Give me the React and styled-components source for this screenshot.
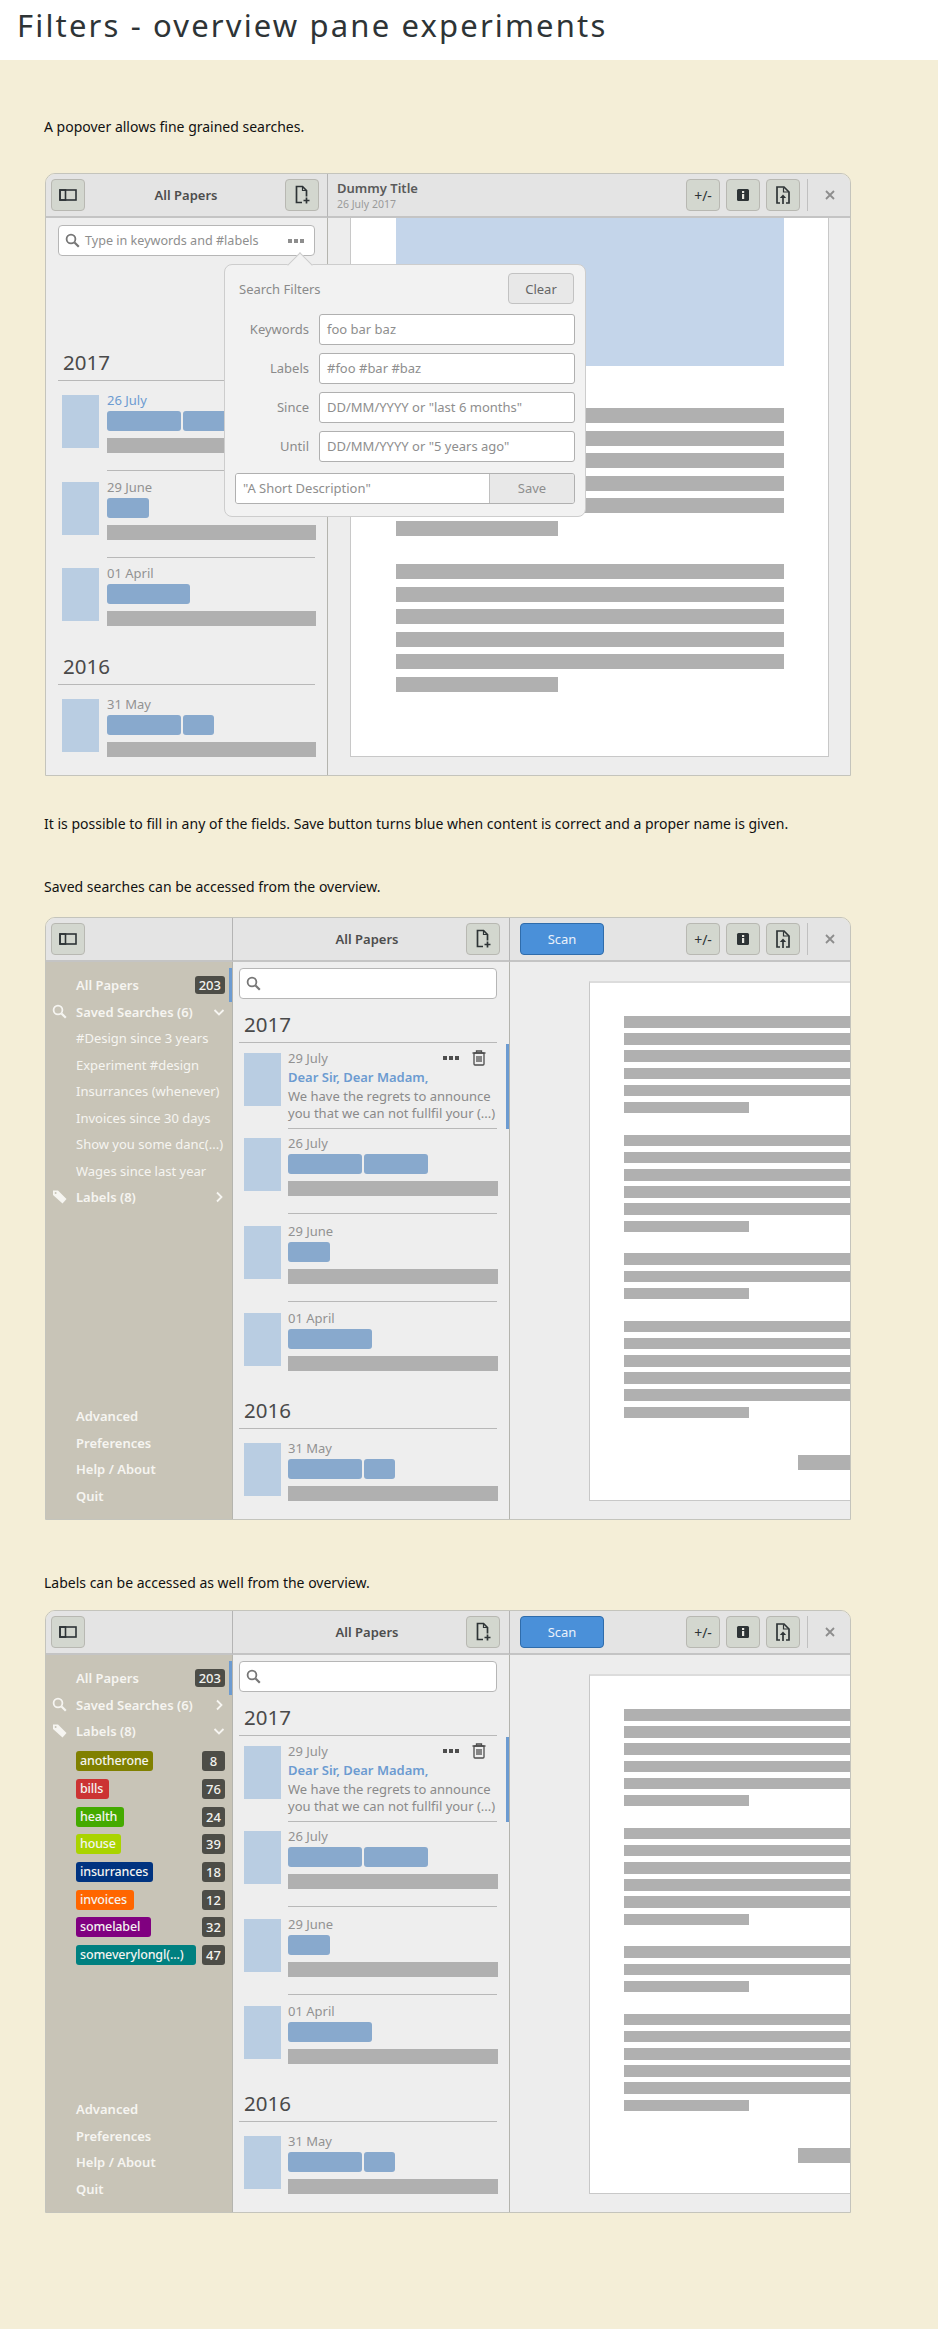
import styled, { createGlobalStyle } from "styled-components";

const GlobalStyle = createGlobalStyle`
  html, body {
    margin: 0;
    padding: 0;
    background-color: #f4eed7;
  }
  * {
    box-sizing: border-box;
  }
`;

const UI_FONT = `"Noto Sans", "Open Sans", sans-serif`;

const Page = styled.div`
  width: 938px;
  height: 2329px;
  overflow: hidden;
  background-color: #f4eed7;
  font-family: ${UI_FONT};
`;

const TitleBar = styled.header`
  height: 60px;
  background-color: #fff;
  display: flex;
  align-items: center;
  padding: 0 0 10px 17px;
`;

const Title = styled.h1`
  margin: 0;
  font-family: ${UI_FONT};
  font-size: 31px;
  font-weight: 400;
  letter-spacing: 2.15px;
  color: #2e3436;
`;

const Main = styled.main`
  padding-left: 45px;
`;

const Caption = styled.p`
  margin: ${(p) => p.$top}px 0 ${(p) => p.$bottom}px -1px;
  height: 20px;
  line-height: 20px;
  font-size: 14px;
  color: #111;
  white-space: nowrap;
`;

const Window = styled.section`
  position: relative;
  width: 806px;
  height: 603px;
  border: 1px solid #c4c4bc;
  border-radius: 10px 10px 0 0;
  overflow: hidden;
  display: grid;
  grid-template-columns: ${(p) => p.$cols};
  grid-template-rows: 44px 1fr;
`;

const HeaderPane = styled.div`
  background-color: #e4e4e4;
  border-bottom: 2px solid #c4c4c4;
  border-right: ${(p) => (p.$last ? "none" : "1px solid #b4b4b4")};
  display: flex;
  align-items: center;
  padding: 0 ${(p) => p.$right ?? 8}px 0 ${(p) => p.$left ?? 5}px;
`;

const HeaderTitle = styled.div`
  flex: 1;
  padding-left: ${(p) => p.$shift ?? 0}px;
  text-align: center;
  font-size: 13px;
  font-weight: 600;
  color: #4d4d4d;
`;

const DocTitleBlock = styled.div`
  display: flex;
  flex-direction: column;
  padding-left: 4px;
`;

const DocTitle = styled.div`
  font-size: 13px;
  font-weight: 600;
  line-height: 17px;
  color: #5a5a5a;
`;

const DocDate = styled.div`
  font-size: 10.5px;
  line-height: 14px;
  color: #9a9a9a;
`;

const ToolButton = styled.button`
  width: 34px;
  height: 32px;
  flex: none;
  padding: 0;
  display: flex;
  align-items: center;
  justify-content: center;
  background-color: #d3d7cf;
  border: 1px solid #b8b8b2;
  border-radius: 4px;
  font-family: ${UI_FONT};
  font-size: 14px;
  color: #2e3436;
`;

const ScanButton = styled.button`
  width: 84px;
  height: 32px;
  padding: 0;
  background-color: #4a90d9;
  border: 1px solid #2f6cab;
  border-radius: 4px;
  font-family: ${UI_FONT};
  font-size: 13px;
  color: #eaf2fb;
`;

const ToolGroup = styled.div`
  margin-left: auto;
  display: flex;
  align-items: center;
  gap: 6px;
`;

const Separator = styled.div`
  width: 1px;
  height: 32px;
  margin-left: 1px;
  background-color: #c0c0c0;
`;

const CloseIcon = styled.div`
  width: 24px;
  margin-left: 4px;
  display: flex;
  justify-content: center;
`;

const Sidebar = styled.nav`
  background-color: #c8c4b7;
  border-right: 1px solid #b4b4ae;
  display: flex;
  flex-direction: column;
  justify-content: space-between;
  padding: 10px 0 10px;
  color: #f6f5f1;
`;

const SideRow = styled.div`
  position: relative;
  height: 26.5px;
  display: grid;
  grid-template-columns: 24px 1fr auto;
  align-items: center;
  padding: 0 7px 0 6px;
  font-size: 13px;
  font-weight: ${(p) => (p.$bold ? 600 : 400)};
  white-space: nowrap;

  &::after {
    content: "";
    display: ${(p) => (p.$active ? "block" : "none")};
    position: absolute;
    right: 0;
    top: -4px;
    width: 3px;
    height: 34px;
    background-color: #6c9bd1;
  }
`;

const Count = styled.span`
  min-width: ${(p) => p.$min ?? 0}px;
  height: ${(p) => p.$h}px;
  line-height: ${(p) => p.$h}px;
  padding: 0 4px;
  border-radius: 3px;
  background-color: #4d4d47;
  color: #f3f3ee;
  text-align: center;
  font-size: 13px;
  font-weight: 500;
`;

const LabelList = styled.div`
  display: flex;
  flex-direction: column;
  gap: 7.7px;
  padding: 6.75px 7px 0 30px;
`;

const LabelRow = styled.div`
  display: flex;
  justify-content: space-between;
`;

const LabelTag = styled.span`
  height: 20px;
  line-height: 19px;
  width: ${(p) => p.$w}px;
  padding-left: 4px;
  border-radius: 3px;
  background-color: ${(p) => p.$color};
  color: #f4f4f0;
  font-size: 12.5px;
  font-weight: 500;
  letter-spacing: -0.15px;
  white-space: nowrap;
`;

const ListPane = styled.div`
  background-color: #eee;
  border-right: 1px solid #b4b4ae;
  padding: ${(p) => p.$top}px ${(p) => p.$right}px 0 ${(p) => p.$left}px;
  overflow: hidden;
`;

const SearchEntry = styled.div`
  height: 31px;
  display: flex;
  align-items: center;
  gap: 5px;
  padding: 0 10px 0 6px;
  background-color: #fff;
  border: 1px solid #b6b6b6;
  border-radius: 4px;
  font-size: 12.6px;
  color: #8e8e8e;
`;

const SearchText = styled.span`
  flex: 1;
  white-space: nowrap;
`;

const Year = styled.div`
  margin-top: ${(p) => p.$top}px;
  height: 36px;
  line-height: 35px;
  padding-left: 5px;
  border-bottom: 1px solid #b8b8b8;
  font-size: 20.5px;
  color: #4a4a4a;
`;

const ItemRow = styled.article`
  position: relative;
  display: flex;
  gap: ${(p) => p.$gap}px;
  padding: ${(p) => p.$pad}px 0 0 ${(p) => p.$left}px;

  &::after {
    content: "";
    display: ${(p) => (p.$active ? "block" : "none")};
    position: absolute;
    right: -12px;
    top: 1px;
    bottom: 0;
    width: 3px;
    background-color: #6c9bd1;
  }
`;

const Thumb = styled.div`
  width: 37px;
  height: 53px;
  flex: none;
  background-color: #b9cde2;
`;

const ItemBody = styled.div`
  flex: 1;
  min-width: 0;
  margin-top: -2px;
  padding-bottom: ${(p) => (p.$text ? 5.5 : 17)}px;
  border-bottom: 1px solid ${(p) => (p.$noLine ? "transparent" : "#b8b8b8")};
`;

const DateRow = styled.div`
  height: 14px;
  line-height: 14px;
  display: flex;
  justify-content: space-between;
  align-items: center;
  font-size: 13px;
  color: ${(p) => (p.$blue ? "#6c9bd1" : "#929292")};
`;

const ItemActions = styled.div`
  display: flex;
  align-items: center;
  gap: 13px;
  margin-right: 11px;
`;

const TagRow = styled.div`
  display: flex;
  gap: 2px;
  margin-top: 4px;
`;

const BlueTag = styled.div`
  width: ${(p) => p.$w}px;
  height: 20px;
  border-radius: 3px;
  background-color: #88a9cd;
`;

const GreyBar = styled.div`
  height: 15px;
  margin: 7px -1px 0 0;
  background-color: #b0b0b0;
`;

const MailTitle = styled.div`
  margin-top: 2.5px;
  height: 19px;
  line-height: 19px;
  font-size: 13px;
  font-weight: 600;
  color: #6c9bd1;
`;

const MailText = styled.div`
  margin-top: 1.5px;
  line-height: 17px;
  font-size: 13px;
  color: #8a8a8a;
  white-space: nowrap;
`;

const DocPane = styled.div`
  background-color: #ededed;
  padding: ${(p) => (p.$big ? "0 21px 18px 22px" : "19px 0 18px 79px")};
  display: flex;
  overflow: hidden;
`;

const Sheet = styled.div`
  flex: 1;
  min-width: 0;
  background-color: #fff;
  border: 1px solid #c8c8c8;
  border-top: ${(p) => (p.$big ? "none" : "2px solid #dcdcdc")};
  border-right: ${(p) => (p.$big ? "1px solid #c8c8c8" : "none")};
  padding: ${(p) => (p.$big ? "0 0 0 45px" : "33px 0 0 34px")};
  overflow: hidden;
`;

const SheetImage = styled.div`
  width: 388px;
  height: 148px;
  margin-bottom: 42px;
  background-color: #c4d5ea;
`;

const TextBlock = styled.div`
  display: flex;
  flex-direction: column;
  gap: ${(p) => (p.$big ? 7.6 : 5.7)}px;
  margin-bottom: ${(p) => (p.$big ? 28 : 21.3)}px;
`;

const TextLine = styled.div`
  height: ${(p) => (p.$big ? 15 : 11.5)}px;
  width: ${(p) => (p.$big ? (p.$short ? 162 : 388) : p.$short ? 125 : 260)}px;
  background-color: #b0b0b0;
`;

const SignatureBar = styled.div`
  width: 60px;
  height: 14.5px;
  margin: 37px 0 0 174px;
  background-color: #b0b0b0;
`;

const Popover = styled.div`
  position: absolute;
  left: 178px;
  top: 90px;
  width: 362px;
  height: 253px;
  padding: 8px 11px 0 10px;
  background-color: #f2f2f2;
  border: 1px solid #cdcdcd;
  border-radius: 8px;

  &::before {
    content: "";
    position: absolute;
    left: 66px;
    top: -9px;
    width: 17px;
    height: 17px;
    transform: rotate(45deg);
    background-color: #f2f2f2;
    border-left: 1px solid #cdcdcd;
    border-top: 1px solid #cdcdcd;
  }
`;

const PopoverHead = styled.div`
  position: relative;
  display: flex;
  justify-content: space-between;
  align-items: center;
  padding-left: 4px;
  margin-bottom: 9.5px;
  font-size: 13px;
  color: #8a8a8a;
`;

const ClearButton = styled.button`
  width: 66px;
  height: 31px;
  padding: 0;
  background-color: #e8e8e8;
  border: 1px solid #c2c2c2;
  border-radius: 4px;
  font-family: ${UI_FONT};
  font-size: 13px;
  color: #666;
`;

const FilterGrid = styled.div`
  display: grid;
  grid-template-columns: 74px 256px;
  column-gap: 10px;
  row-gap: 8px;
  align-items: center;
`;

const FilterLabel = styled.label`
  text-align: right;
  font-size: 13px;
  color: #8a8a8a;
`;

const FieldBox = styled.div`
  height: 31px;
  line-height: 29px;
  padding-left: 7px;
  background-color: #fff;
  border: 1px solid #b0b0b0;
  border-radius: 3px;
  font-size: 13px;
  color: #8e8e8e;
  white-space: nowrap;
`;

const SaveRow = styled.div`
  display: flex;
  height: 31px;
  width: 340px;
  margin-top: 11.5px;
  border: 1px solid #b0b0b0;
  border-radius: 3px;
  overflow: hidden;
  font-size: 13px;
  color: #8e8e8e;
`;

const SaveInput = styled.div`
  flex: 1;
  line-height: 29px;
  padding-left: 7px;
  background-color: #fff;
  border-right: 1px solid #c0c0c0;
`;

const SaveButton = styled.div`
  width: 84px;
  line-height: 29px;
  text-align: center;
  background-color: #e8e8e8;
`;

const PanelIcon = () => (
  <svg width="18" height="14" viewBox="0 0 18 14">
    <rect x="1" y="2" width="16" height="10" fill="none" stroke="#2e3436" strokeWidth="1.6" />
    <rect x="1" y="2" width="5.5" height="10" fill="none" stroke="#2e3436" strokeWidth="1.6" />
  </svg>
);

const NewDocIcon = () => (
  <svg width="16" height="20" viewBox="0 0 16 20" fill="none" stroke="#2e3436" strokeWidth="1.7">
    <path d="M8 17.5H2.5V1.5h6l4 4v6" />
    <path d="M8.5 1.5v4h4" strokeWidth="1.2" />
    <path d="M9.5 15.5h6M12.5 12.5v6" />
  </svg>
);

const InfoIcon = () => (
  <svg width="16" height="16" viewBox="0 0 16 16">
    <rect x="2" y="2" width="12" height="12" rx="1.5" fill="#2e3436" />
    <rect x="7" y="4" width="2.2" height="2" fill="#e8e8e2" />
    <rect x="7" y="7" width="2.2" height="5" fill="#e8e8e2" />
  </svg>
);

const UploadIcon = () => (
  <svg width="16" height="20" viewBox="0 0 16 20" fill="none" stroke="#2e3436" strokeWidth="1.7">
    <path d="M5 18H2V2h7l5 5v11h-3" />
    <path d="M8.5 2.5v4.5h5" strokeWidth="1.2" />
    <path d="M8 19v-6.5" />
    <path d="M4.8 13 8 9.5 11.2 13z" fill="#2e3436" stroke="none" />
  </svg>
);

const CrossIcon = () => (
  <svg width="10" height="10" viewBox="0 0 10 10" stroke="#8d8d8d" strokeWidth="1.8">
    <path d="M1 1l8 8M9 1l-8 8" />
  </svg>
);

const SearchIcon = ({ color = "#777", size = 15 }) => (
  <svg width={size} height={size} viewBox="0 0 15 15" fill="none" stroke={color} strokeWidth="1.8">
    <circle cx="6" cy="6" r="4.4" />
    <path d="M9.5 9.5l4.3 4.3" strokeWidth="2.2" />
  </svg>
);

const TagIcon = () => (
  <svg width="16" height="14" viewBox="0 0 16 14">
    <path d="M1 0.5h5l8.5 8.5-4 4.5L1 5z" fill="#f6f5f1" />
    <circle cx="3.6" cy="3" r="1" fill="#c8c4b7" />
  </svg>
);

const Chevron = ({ open }) => (
  <svg width="12" height="12" viewBox="0 0 12 12" fill="none" stroke="#f6f5f1" strokeWidth="1.8">
    <path d={open ? "M1.5 4l4.5 4.5L10.5 4" : "M4 1.5L8.5 6 4 10.5"} />
  </svg>
);

const Dots = ({ color = "#4d4d4d" }) => (
  <svg width="16" height="4" viewBox="0 0 16 4" fill={color}>
    <rect x="0" y="0" width="4" height="4" />
    <rect x="6" y="0" width="4" height="4" />
    <rect x="12" y="0" width="4" height="4" />
  </svg>
);

const TrashIcon = () => (
  <svg width="14" height="16" viewBox="0 0 14 16" fill="none" stroke="#4d4d4d" strokeWidth="1.3">
    <path d="M0.5 3h13M4.5 3V1h5v2" />
    <rect x="2" y="3" width="10" height="12" rx="1" />
    <path d="M5 6v6M7 6v6M9 6v6" />
  </svg>
);

const LABELS = [
  { name: "anotherone", w: 77, color: "#808000", count: 8 },
  { name: "bills", w: 33, color: "#cc3333", count: 76 },
  { name: "health", w: 48, color: "#44aa00", count: 24 },
  { name: "house", w: 45, color: "#aad400", count: 39 },
  { name: "insurrances", w: 77, color: "#003380", count: 18 },
  { name: "invoices", w: 58, color: "#ff6600", count: 12 },
  { name: "somelabel", w: 75, color: "#800080", count: 32 },
  { name: "someverylongl(...)", w: 120, color: "#008080", count: 47 },
];

const SAVED = [
  "#Design since 3 years",
  "Experiment #design",
  "Insurrances (whenever)",
  "Invoices since 30 days",
  "Show you some danc(...)",
  "Wages since last year",
];

const Item = ({ date, tags, pad, left = 5, gap = 7, blue, noLine, mail }) => (
  <ItemRow $pad={pad} $left={left} $gap={gap} $active={mail}>
    <Thumb />
    <ItemBody $noLine={noLine} $text={mail}>
      <DateRow $blue={blue}>
        {date}
        {mail && (
          <ItemActions>
            <Dots />
            <TrashIcon />
          </ItemActions>
        )}
      </DateRow>
      {mail ? (
        <>
          <MailTitle>Dear Sir, Dear Madam,</MailTitle>
          <MailText>
            We have the regrets to announce
            <br />
            you that we can not fullfil your (...)
          </MailText>
        </>
      ) : (
        <>
          <TagRow>
            {tags.map((w, i) => (
              <BlueTag key={i} $w={w} />
            ))}
          </TagRow>
          <GreyBar />
        </>
      )}
    </ItemBody>
  </ItemRow>
);

const Block = ({ lines, big }) => (
  <TextBlock $big={big}>
    {Array.from({ length: lines }).map((_, i) => (
      <TextLine key={i} $big={big} $short={i === lines - 1} />
    ))}
  </TextBlock>
);

const RightTools = () => (
  <ToolGroup>
    <ToolButton>+/-</ToolButton>
    <ToolButton>
      <InfoIcon />
    </ToolButton>
    <ToolButton>
      <UploadIcon />
    </ToolButton>
    <Separator />
    <CloseIcon>
      <CrossIcon />
    </CloseIcon>
  </ToolGroup>
);

const SearchWindow = () => (
  <Window $cols="282px 1fr">
    <HeaderPane>
      <ToolButton>
        <PanelIcon />
      </ToolButton>
      <HeaderTitle $shift={2}>All Papers</HeaderTitle>
      <ToolButton>
        <NewDocIcon />
      </ToolButton>
    </HeaderPane>
    <HeaderPane $last $left={5}>
      <DocTitleBlock>
        <DocTitle>Dummy Title</DocTitle>
        <DocDate>26 July 2017</DocDate>
      </DocTitleBlock>
      <RightTools />
    </HeaderPane>
    <ListPane $top={7} $left={12} $right={12}>
      <SearchEntry>
        <SearchIcon />
        <SearchText>Type in keywords and #labels</SearchText>
        <Dots color="#8e8e8e" />
      </SearchEntry>
      <Year $top={89}>2017</Year>
      <Item date="26 July" blue tags={[74, 68]} pad={14} left={4} gap={8} />
      <Item date="29 June" tags={[42]} pad={11} left={4} gap={8} />
      <Item date="01 April" tags={[83]} pad={10} left={4} gap={8} noLine />
      <Year $top={5}>2016</Year>
      <Item date="31 May" tags={[74, 31]} pad={14} left={4} gap={8} noLine />
    </ListPane>
    <DocPane $big>
      <Sheet $big>
        <SheetImage />
        <Block lines={6} big />
        <Block lines={6} big />
      </Sheet>
    </DocPane>
    <Popover>
      <PopoverHead>
        Search Filters
        <ClearButton>Clear</ClearButton>
      </PopoverHead>
      <FilterGrid>
        <FilterLabel>Keywords</FilterLabel>
        <FieldBox>foo bar baz</FieldBox>
        <FilterLabel>Labels</FilterLabel>
        <FieldBox>#foo #bar #baz</FieldBox>
        <FilterLabel>Since</FilterLabel>
        <FieldBox>DD/MM/YYYY or "last 6 months"</FieldBox>
        <FilterLabel>Until</FilterLabel>
        <FieldBox>DD/MM/YYYY or "5 years ago"</FieldBox>
      </FilterGrid>
      <SaveRow>
        <SaveInput>"A Short Description"</SaveInput>
        <SaveButton>Save</SaveButton>
      </SaveRow>
    </Popover>
  </Window>
);

const OverviewWindow = ({ expanded }) => (
  <Window $cols="187px 277px 1fr">
    <HeaderPane>
      <ToolButton>
        <PanelIcon />
      </ToolButton>
    </HeaderPane>
    <HeaderPane $right={9}>
      <HeaderTitle $shift={30}>All Papers</HeaderTitle>
      <ToolButton>
        <NewDocIcon />
      </ToolButton>
    </HeaderPane>
    <HeaderPane $last $left={10}>
      <ScanButton>Scan</ScanButton>
      <RightTools />
    </HeaderPane>
    <Sidebar>
      <div>
        <SideRow $bold $active>
          <span />
          All Papers
          <Count $h={18}>203</Count>
        </SideRow>
        <SideRow $bold>
          <SearchIcon color="#f6f5f1" />
          Saved Searches (6)
          <Chevron open={expanded === "saved"} />
        </SideRow>
        {expanded === "saved" &&
          SAVED.map((s) => (
            <SideRow key={s}>
              <span />
              {s}
            </SideRow>
          ))}
        <SideRow $bold>
          <TagIcon />
          Labels (8)
          <Chevron open={expanded === "labels"} />
        </SideRow>
        {expanded === "labels" && (
          <LabelList>
            {LABELS.map((l) => (
              <LabelRow key={l.name}>
                <LabelTag $w={l.w} $color={l.color}>
                  {l.name}
                </LabelTag>
                <Count $h={20} $min={23}>
                  {l.count}
                </Count>
              </LabelRow>
            ))}
          </LabelList>
        )}
      </div>
      <div>
        {["Advanced", "Preferences", "Help / About", "Quit"].map((s) => (
          <SideRow key={s} $bold>
            <span />
            {s}
          </SideRow>
        ))}
      </div>
    </Sidebar>
    <ListPane $top={6} $left={6} $right={12}>
      <SearchEntry>
        <SearchIcon />
      </SearchEntry>
      <Year $top={8}>2017</Year>
      <Item date="29 July" pad={10} mail />
      <Item date="26 July" tags={[74, 64]} pad={9} />
      <Item date="29 June" tags={[42]} pad={12} />
      <Item date="01 April" tags={[84]} pad={11} noLine />
      <Year $top={4}>2016</Year>
      <Item date="31 May" tags={[74, 31]} pad={14} noLine />
    </ListPane>
    <DocPane>
      <Sheet>
        <Block lines={6} />
        <Block lines={6} />
        <Block lines={3} />
        <Block lines={6} />
        <SignatureBar />
      </Sheet>
    </DocPane>
  </Window>
);

const App = () => (
  <Page>
    <GlobalStyle />
    <TitleBar>
      <Title>Filters - overview pane experiments</Title>
    </TitleBar>
    <Main>
      <Caption $top={57} $bottom={36}>
        A popover allows fine grained searches.
      </Caption>
      <SearchWindow />
      <Caption $top={38} $bottom={43}>
        It is possible to fill in any of the fields. Save button turns blue when content is correct and a proper name is given.
      </Caption>
      <Caption $top={0} $bottom={20}>
        Saved searches can be accessed from the overview.
      </Caption>
      <OverviewWindow expanded="saved" />
      <Caption $top={53} $bottom={17}>
        Labels can be accessed as well from the overview.
      </Caption>
      <OverviewWindow expanded="labels" />
    </Main>
  </Page>
);

export default App;
